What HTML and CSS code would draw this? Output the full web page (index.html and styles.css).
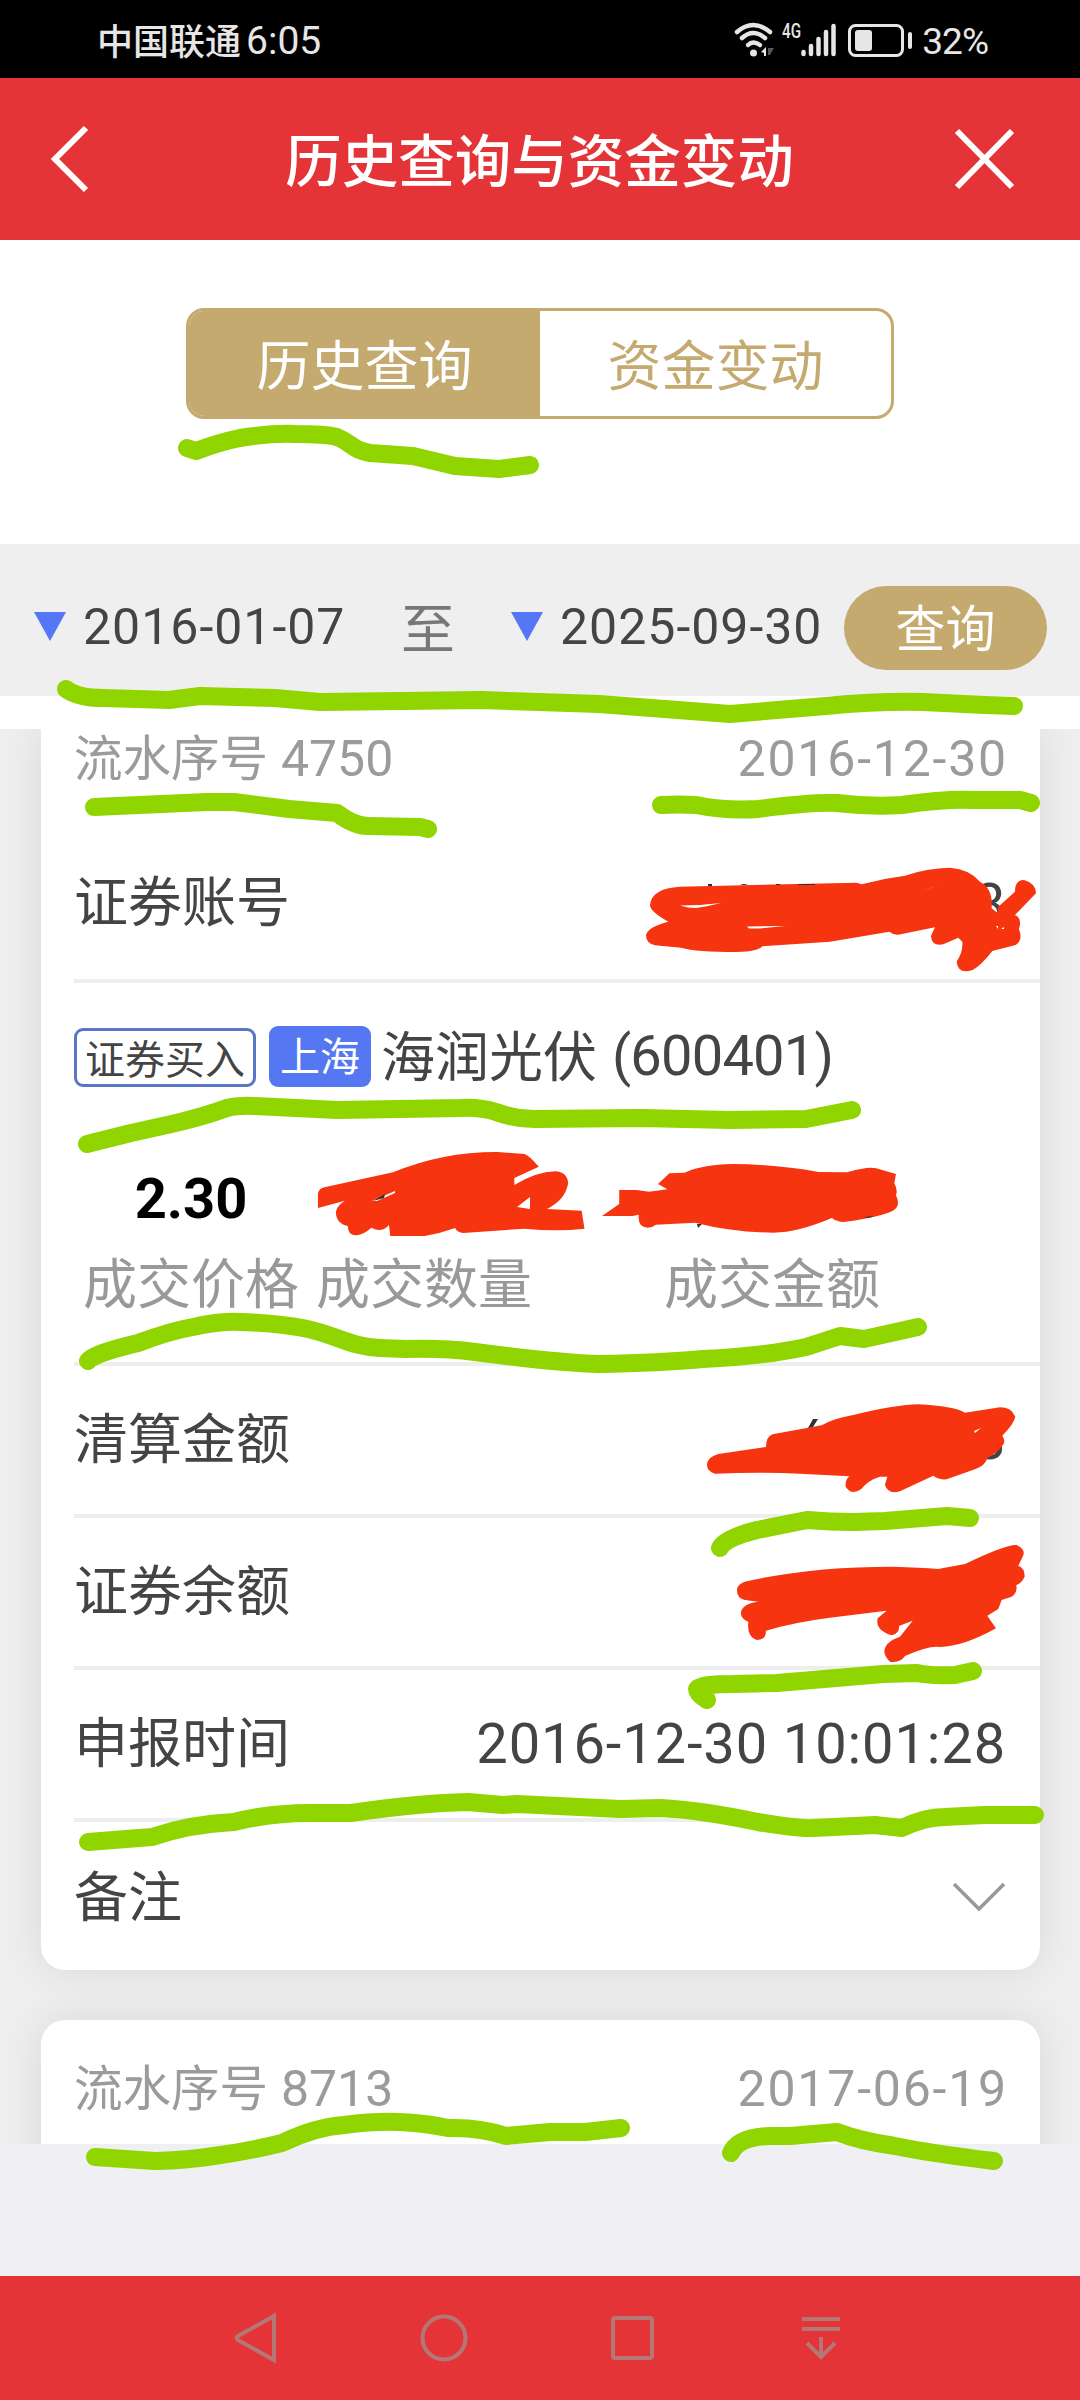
FILE: index.html
```html
<!DOCTYPE html>
<html lang="zh-CN">
<head>
  <meta charset="utf-8" />
  <title>历史查询与资金变动</title>
  <link rel="stylesheet" href="styles.css">
</head>
<body>
  <div class="screen">
    <!-- Status bar -->
    <div class="status-bar">
      <span class="carrier">中国联通</span>
      <span class="clock">6:05</span>
      <svg class="status-icons" width="180" height="44" viewBox="0 0 180 44">
        <g fill="none" stroke="#e6e6e6" stroke-width="4.500" stroke-linecap="round">
          <path d="M3 14 Q19 0 36 14" />
          <path d="M8 20 Q19 10 31 20" />
          <path d="M14 27 Q19 22 26 27" />
        </g>
        <circle cx="19.500" cy="35" r="3.500" fill="#e6e6e6" />
        <path d="M27 34 l5 -5 v9 h-2 v-3z" fill="#e6e6e6" />
        <path d="M34 30 h6 l-4 7 h-2z" fill="#555" />
        <text x="48" y="20" class="net-type" textLength="19" lengthAdjust="spacingAndGlyphs">4G</text>
        <g stroke="#e6e6e6" stroke-width="4.500" stroke-linecap="round">
          <path d="M69.500 34V36" />
          <path d="M77 28V36" />
          <path d="M84.500 21V36" />
          <path d="M92 14V36" />
          <path d="M99.500 8V36" />
        </g>
        <rect x="115.500" y="7.500" width="53" height="30" rx="6" fill="none" stroke="#e6e6e6" stroke-width="3" />
        <rect x="121" y="12" width="17" height="21" rx="3" fill="#e6e6e6" />
        <rect x="174" y="14" width="4" height="17" rx="2" fill="#e6e6e6" />
      </svg>
      <span class="battery">32%</span>
    </div>

    <!-- Title bar -->
    <div class="title-bar">
      <svg width="40" height="72" viewBox="0 0 40 72">
        <path d="M36 5 L5 36 L36 67" />
      </svg>
      <h1>历史查询与资金变动</h1>
      <svg width="64" height="64" viewBox="0 0 64 64">
        <path d="M4 4 L59 60 M59 4 L4 60" />
      </svg>
    </div>

    <div class="tabs-wrap">
      <div class="tabs">
        <div class="tab active">历史查询</div>
        <div class="tab">资金变动</div>
      </div>
    </div>

    <!-- Date range -->
    <div class="filter">
      <span class="arrow"></span>
      <span class="date">2016-01-07</span>
      <span class="to">至</span>
      <span class="arrow"></span>
      <span class="date">2025-09-30</span>
      <span class="query">查询</span>
    </div>

    <!-- Records -->
    <div class="list">
      <div class="card card-first">
        <div class="card-head">
          <span>流水序号 <span class="num">4750</span></span>
          <span class="head-date">2016-12-30</span>
        </div>
        <div class="row row-account">
          <span class="label">证券账号</span>
          <span class="value">8</span>
        </div>
        <div class="trade">
          <div class="stock">
            <span class="tag-type">证券买入</span>
            <span class="tag-market">上海</span>
            <span class="stock-name">海润光伏</span>
            <span class="stock-code">(600401)</span>
          </div>
          <div class="figures">
            <div class="figure"><b>2.30</b><span>成交价格</span></div>
            <div class="figure"><b></b><span>成交数量</span></div>
            <div class="figure figure-amount"><b></b><span>成交金额</span></div>
          </div>
        </div>
        <div class="row">
          <span class="label">清算金额</span>
          <span class="value">8</span>
        </div>
        <div class="row">
          <span class="label">证券余额</span>
        </div>
        <div class="row">
          <span class="label">申报时间</span>
          <span class="value">2016-12-30 10:01:28</span>
        </div>
        <div class="row row-last">
          <span class="label">备注</span>
          <svg class="chevron" width="54" height="32" viewBox="0 0 54 32">
            <path d="M2 2 L27 27 L52 2" />
          </svg>
        </div>
      </div>

      <div class="card card-next">
        <div class="card-head">
          <span>流水序号 <span class="num">8713</span></span>
          <span class="head-date">2017-06-19</span>
        </div>
      </div>
    </div>

    <div class="spacer"></div>

    <!-- System navigation -->
    <div class="nav-bar">
      <svg width="50" height="54" viewBox="0 0 50 54"><path d="M43 5 V49 L7 29 Q4 27 7 25 Z" /></svg>
      <svg width="50" height="54" viewBox="0 0 50 54"><circle cx="25" cy="27" r="21.500" /></svg>
      <svg width="50" height="54" viewBox="0 0 50 54"><rect x="5" y="7" width="39" height="40" rx="2" /></svg>
      <svg width="50" height="54" viewBox="0 0 50 54"><path d="M6 8 H44 M6 18 H44 M25 26 V45 M11 32 L25 46 L39 32" /></svg>
    </div>

    <!-- Marker pen drawn over the page -->
    <svg class="marker" width="1080" height="2400" viewBox="0 0 1080 2400">
      <g class="green">
        <path d="M187 448 L196 451 Q220 442 240 438 Q270 433 296 434 Q325 434 337 437 C352 443 352 450 370 453 L413 456 L455 466 L499 469 L530 465" />
        <path d="M66 689 Q78 698 103 698 L169 700 L200 696 L275 698 L320 702 L482 700 L599 704 L730 714 L826 706 Q880 701 923 702 L985 705 L1014 706" />
        <path d="M94 807 L207 802 L234 802 L289 809 L337 813 Q354 826 368 826 L420 827 L428 829" />
        <path d="M661 805 Q678 804 696 805 Q725 811 758 809 Q810 802 837 803 Q870 807 902 805 Q945 799 971 800 L1020 800 L1031 803" />
        <path d="M87 1144 L131 1133 L176 1123 Q205 1116 227 1108 Q238 1105 255 1106 L337 1110 L461 1108 Q480 1107 496 1112 Q515 1119 534 1119 L641 1118 L730 1120 L806 1119 L852 1110" />
        <path d="M88 1361 Q92 1354 138 1343 Q170 1331 193 1327 Q220 1321 241 1322 Q275 1323 303 1328 C335 1334 350 1347 380 1348 L406 1349 Q445 1348 475 1352 Q560 1363 599 1364 Q660 1363 703 1359 Q765 1356 806 1347 L840 1336 L864 1339 L918 1327" />
        <path d="M720 1548 Q725 1538 757 1530 L807 1520 Q830 1522 853 1522 L885 1521 L947 1516 L970 1518" />
        <path d="M707 1700 Q697 1694 697 1689 Q701 1684 733 1684 L777 1683 L883 1674 L917 1673 Q930 1676 955 1675 L973 1671" />
        <path d="M88 1842 L152 1837 Q190 1824 234 1822 Q270 1813 310 1813 L351 1813 Q420 1803 468 1802 L503 1805 L517 1804 L620 1809 L661 1808 Q700 1810 758 1822 Q800 1829 813 1828 L875 1825 L902 1828 Q925 1817 944 1817 L985 1815 L1035 1815" />
        <path d="M95 2157 L155 2161 Q190 2160 214 2156 Q250 2151 282 2143 Q315 2127 344 2125 Q375 2121 399 2122 Q425 2123 448 2128 Q480 2127 506 2136 L550 2132 L585 2132 L621 2128" />
        <path d="M731 2153 Q738 2137 770 2136 L790 2136 L837 2132 Q860 2141 895 2146 Q935 2154 994 2161" />
      </g>
      <g class="red">
        <path transform="translate(600 830) scale(.3333)" d="M205 275 Q150 245 150 225 Q155 175 240 170 L770 158 L785 163 Q850 145 915 137 Q980 114 1050 113 Q1110 118 1140 155 Q1180 175 1175 235 L1192 248 L1195 230 L1245 185 Q1245 150 1272 150 Q1308 160 1308 190 L1245 255 Q1262 262 1260 285 L1257 297 Q1270 330 1247 345 L1177 363 Q1145 405 1118 420 Q1075 435 1070 395 Q1090 365 1087 335 L1075 323 L1030 343 Q995 350 993 318 L1005 292 L895 314 Q880 315 868 305 L690 335 L487 349 Q475 365 410 366 Q290 366 243 353 L165 346 Q138 340 138 315 Q145 290 205 275Z" />
        <g transform="translate(300 1130) scale(.4082 .3333)">
          <path d="M44 234 V190 Q47 175 60 172 L228 127 Q350 65 485 66 L550 72 Q560 75 585 110 L525 144 V165 Q580 125 625 124 Q655 126 657 160 Q650 210 605 237 L690 242 L697 296 Q630 306 550 296 L400 309 Q385 308 380 294 Q345 310 305 318 H221 L218 285 Q200 310 175 293 Q145 325 125 312 Q118 305 117 288 Q88 280 88 245 Q92 225 110 212Z" />
          <path d="M740 258 L782 222 V180 L825 180 L855 185 L900 178 L877 162 L905 130 L942 128 Q985 104 1060 102 Q1170 103 1270 126 L1340 127 Q1400 105 1420 118 L1460 132 L1456 160 Q1465 180 1460 196 Q1472 225 1455 240 Q1430 260 1332 276 Q1315 275 1303 264 Q1220 307 1160 308 Q1060 307 968 278 L872 284 Q852 302 835 285 Q828 275 830 254 L815 258Z" />
        </g>
        <g transform="translate(600 1370) scale(.3333)">
          <path d="M345 311 Q320 305 321 282 Q325 260 355 252 L498 231 Q498 200 518 193 L665 166 Q700 145 760 135 Q890 104 955 103 Q1060 108 1095 128 L1200 112 Q1235 112 1246 140 Q1243 160 1207 197 Q1215 207 1212 220 Q1200 245 1162 264 Q1155 288 1125 298 L1040 328 Q1018 330 1000 317 L900 364 Q865 375 855 345 L862 320 H840 Q805 330 783 358 Q755 378 737 350 Q735 330 748 319 L600 311 Q480 305 345 311Z" />
          <path d="M475 695 L435 690 Q410 685 411 658 Q415 640 440 634 Q630 590 880 590 Q960 592 1015 597 L1095 582 Q1220 522 1250 525 Q1280 540 1268 560 L1255 587 Q1275 595 1274 620 Q1265 640 1249 645 Q1253 670 1235 680 L1205 690 L1195 717 L1162 737 L1188 775 Q1090 830 1020 831 Q990 825 915 858 Q900 880 870 875 Q845 850 857 830 Q865 812 900 800 L938 752 L897 768 Q900 790 875 796 Q825 780 833 745 L860 722 L690 743 Q580 757 498 782 Q498 810 470 810 Q440 800 445 756 Q420 745 423 725 Q430 700 475 695Z" />
        </g>
      </g>
      <!-- gaps the pen left uncovered -->
      <g class="gaps">
        <path d="M680 905.500 L700 905 L721 903 Q705 907 696 908 Q688 908 680 905.500Z M747 926.500 L785 926 L760 928.500 L749 928.500Z M996 926 l2 0 v3z M1001 929 l3 -2 v2z M922 890 L939 886 L930 888Z" />
        <path d="M372 1201 L395 1191 L395 1193 L377 1201Z M517 1207 L530 1197 V1209Z" />
        <path d="M974 1431 L981 1428 L975 1433Z" />
      </g>
      <g class="ink">
        <path d="M373 1201 L385 1194 L384 1198Z M697 1224 h5 l-4 4z M864 1217 l10 -1 q-4 3 -10 1z" />
        <path d="M708 884 h4 v2 h-4z M740 885 q4 -2 8 0z M776 884 h4 v1 h-4z M798 884 h17 v1 h-17z" />
        <path d="M813 1419 h5 l-5 8 l-5 1z" />
      </g>
    </svg>
  </div>
</body>
</html>
```
FILE: styles.css
```css
body {
  margin: 0;
  background: #fff;
  font-family: "Noto Sans CJK SC", sans-serif;
  color: #444;
}

.screen {
  position: relative;
  width: 1080px;
  height: 2400px;
  overflow: hidden;
  display: flex;
  flex-direction: column;
  line-height: 1;
  white-space: nowrap;
}

/* status bar */
.status-bar {
  box-sizing: border-box;
  height: 78px;
  flex: none;
  display: flex;
  align-items: center;
  padding: 2px 92px 0 97px;
  background: #000;
  color: #e6e6e6;
}

.carrier {
  font-size: 36px;
  font-weight: 500;
  padding-bottom: 2px;
}

.clock,
.battery {
  font-family: Roboto, sans-serif;
  font-size: 39px;
  padding-top: 2px;
}

.clock {
  margin-left: 5px;
}

.status-icons {
  margin-left: auto;
  margin-right: 8px;
}

.battery {
  font-size: 37px;
  letter-spacing: -1px;
}

.net-type {
  font: 500 20px Roboto, sans-serif;
  fill: #e6e6e6;
}

/* title bar */
.title-bar {
  box-sizing: border-box;
  height: 162px;
  flex: none;
  display: flex;
  align-items: center;
  justify-content: space-between;
  padding: 0 63px 0 50px;
  background: #e43437;
  color: #fff;
}

.title-bar h1 {
  margin: 0 0 0 36px;
  padding-bottom: 4px;
  font-size: 56.5px;
  font-weight: 500;
}

.title-bar svg {
  fill: none;
  stroke: #fff;
  stroke-width: 6;
}

/* tabs */
.tabs-wrap {
  box-sizing: border-box;
  height: 304px;
  flex: none;
  padding: 68px 186px 0;
}

.tabs {
  box-sizing: border-box;
  height: 111px;
  display: flex;
  border: 3px solid #c5aa70;
  border-radius: 18px;
  overflow: hidden;
}

.tab {
  flex: 1;
  display: flex;
  align-items: center;
  justify-content: center;
  padding-bottom: 2px;
  font-size: 54px;
  color: #c5aa70;
}

.tab.active {
  background: #c5aa70;
  color: #fff;
}

/* date filter */
.filter {
  box-sizing: border-box;
  height: 152px;
  flex: none;
  display: flex;
  align-items: center;
  padding: 16px 33px 0 34px;
  background: #efefef;
}

.arrow {
  border: 16px solid transparent;
  border-top: 29px solid #5577f5;
  border-bottom: 0;
  margin: 0 17px 3px 0;
}

.date {
  width: 262px;
  padding-bottom: 2px;
  font-family: Roboto, sans-serif;
  font-size: 50px;
  letter-spacing: 1px;
}

.to {
  width: 54px;
  margin: 0 56px 4px 56px;
  font-size: 54px;
  color: #777;
}

.query {
  width: 203px;
  height: 84px;
  line-height: 79px;
  margin-left: auto;
  border-radius: 42px;
  background: #c5aa70;
  color: #fff;
  font-size: 50px;
  text-align: center;
}

/* records */
.list {
  height: 1415px;
  flex: none;
  margin-top: 33px;
  padding: 0 40px 0 41px;
  background: #eee;
  overflow: hidden;
}

.card {
  background: #fff;
  border-radius: 24px;
  box-shadow: 0 0 40px rgba(0, 0, 0, 0.09);
}

.card-first {
  height: 1241px;
  border-radius: 0 0 24px 24px;
}

.card-next {
  height: 200px;
  margin-top: 50px;
  padding-top: 39px;
}

.card-head {
  display: flex;
  align-items: center;
  justify-content: space-between;
  height: 56px;
  padding: 0 32px 0 33px;
  font-size: 48.5px;
  color: #9b9b9b;
}

.num,
.head-date,
.value,
.stock-code,
.figure b {
  font-family: Roboto, sans-serif;
}

.num {
  margin-left: 2px;
  font-size: 50px;
}

.head-date {
  font-size: 50px;
  letter-spacing: 1.8px;
  padding-top: 3px;
}

.row {
  box-sizing: border-box;
  height: 152px;
  display: flex;
  align-items: center;
  justify-content: space-between;
  margin-left: 33px;
  padding-right: 34px;
  border-bottom: 4px solid #eee;
  font-size: 54px;
}

.label {
  padding-bottom: 9px;
}

.row-account {
  height: 198px;
  padding-top: 43px;
}

.row-last {
  border-bottom: 0;
}

.value {
  font-size: 56px;
  letter-spacing: 0.9px;
}

.chevron {
  fill: none;
  stroke: #999;
  stroke-width: 3.5;
}

.trade {
  box-sizing: border-box;
  height: 383px;
  margin-left: 33px;
  padding-top: 43px;
  border-bottom: 4px solid #eee;
}

.stock {
  display: flex;
  align-items: center;
  height: 61px;
  font-size: 54px;
}

.tag-type,
.tag-market {
  box-sizing: border-box;
  font-size: 40px;
  border-radius: 9px;
  text-align: center;
}

.tag-type {
  width: 182px;
  height: 59px;
  line-height: 52px;
  border: 3px solid #5777c4;
  margin-top: 2px;
}

.tag-market {
  width: 102px;
  height: 61px;
  line-height: 56px;
  margin: 0 10px 0 13px;
  background: #5577f2;
  color: #fff;
}

.stock-name {
  padding-bottom: 6px;
}

.stock-code {
  margin-left: 15px;
  padding-bottom: 2px;
  font-size: 56px;
  letter-spacing: -0.8px;
}

.figures {
  display: flex;
  padding-top: 84px;
}

.figure {
  width: 216px;
  margin-left: 9px;
  margin-right: 8px;
  display: flex;
  flex-direction: column;
  align-items: center;
  font-size: 54px;
  color: #999;
}

.figure b {
  height: 83px;
  font-size: 56px;
  color: #000;
}

.figure-amount {
  margin-left: 124px;
}

/* bottom */
.spacer {
  flex: 1;
  background: #efeff4;
}

.nav-bar {
  box-sizing: border-box;
  height: 124px;
  flex: none;
  display: flex;
  justify-content: space-between;
  align-items: center;
  padding: 0 234px 0 231px;
  background: #e43437;
}

.nav-bar svg {
  fill: none;
  stroke: #b37876;
  stroke-width: 4;
}

/* marker pen */
.marker {
  position: absolute;
  left: 0;
  top: 0;
}

.green {
  fill: none;
  stroke: #90d400;
  stroke-width: 18;
  stroke-linecap: round;
  stroke-linejoin: round;
}

.red {
  fill: #f63410;
}

.gaps {
  fill: #fff;
}

.ink {
  fill: #333;
}
```
